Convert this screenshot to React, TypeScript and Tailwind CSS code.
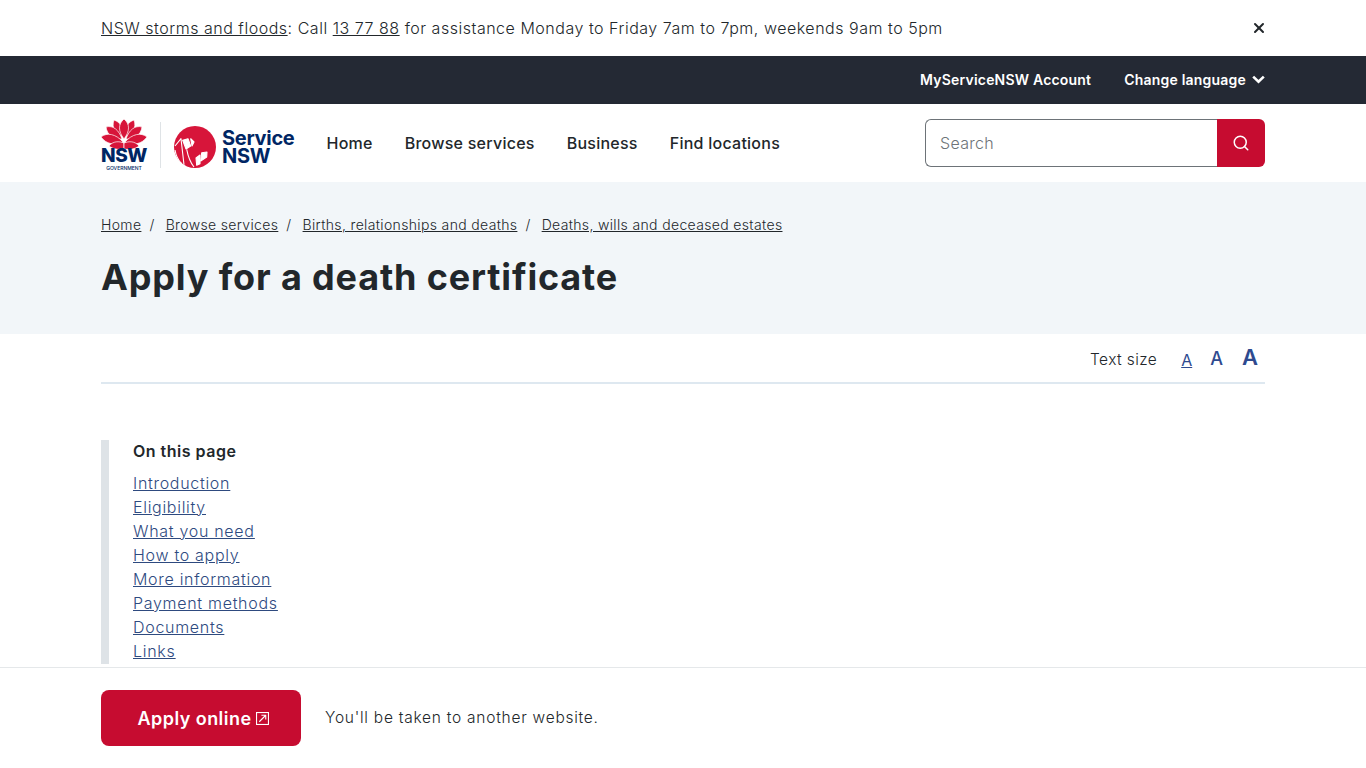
import { Search, X } from 'lucide-react';

const font = "font-['Inter','Liberation_Sans',sans-serif]";

const navLinks = ['Home', 'Browse services', 'Business', 'Find locations'];

const crumbs = [
  'Home',
  'Browse services',
  'Births, relationships and deaths',
  'Deaths, wills and deceased estates',
];

const pageLinks = [
  'Introduction',
  'Eligibility',
  'What you need',
  'How to apply',
  'More information',
  'Payment methods',
  'Documents',
  'Links',
];

function Petals() {
  return (
    <>
      <path d="M13 1 C19 3 22 8 22 17 C15 15 10 9 13 1Z" />
      <path d="M5 8 C12 6 18 11 21 20 C13 21 6 16 5 8Z" />
      <path d="M0 18 C6 13 15 15 22 23 C14 27 5 25 0 18Z" />
      <path d="M8 27 C12 22 18 22 23 24 L23 30 C17 31 12 30 8 27Z" />
    </>
  );
}

function NswLogo() {
  return (
    <div className="mt-[4px] flex w-[46px] flex-col items-center">
      <svg viewBox="0 0 46 30" className="h-[30px] w-[46px]">
        <g fill="#d7153a" stroke="#fff" strokeWidth="0.7">
          <Petals />
          <g transform="matrix(-1 0 0 1 46 0)">
            <Petals />
          </g>
          <path d="M23 0 C29 5 29 12 23 20 C17 12 17 5 23 0Z" />
        </g>
      </svg>
      <span className="mt-[-1px] text-[19px] leading-[16px] font-extrabold tracking-[-0.4px] text-[#002664]">NSW</span>
      <span className="mt-[1px] text-[5px] leading-[6px] font-medium text-[#002664]">GOVERNMENT</span>
    </div>
  );
}

function ServiceLogo() {
  return (
    <div className="mt-[8px] flex items-center gap-[6px]">
      <svg viewBox="0 0 42 42" className="h-[42px] w-[42px]">
        <circle cx="21" cy="21" r="21" fill="#d7153a" />
        <g fill="none" stroke="#fff" strokeWidth="1.1" strokeLinejoin="round">
          <path d="M1 20 L7 12.7 L10 38.7" />
          <path d="M1 24 C2 30 4 34 7.7 37.7" />
          <path d="M12.7 23.3 C14 30 16 36 20 41" />
          <path d="M8.7 14.3 L14 12.7 L16.7 20 L12 23Z" fill="#fff" />
          <path d="M16.7 12.7 L20 16 L18 20Z" fill="#fff" />
          <path d="M27.7 26.7 L33 26 L32.7 31 L26.7 35Z" fill="#fff" />
          <path d="M22 32 L26 29 L26 37.7 L22.7 39.3Z" fill="#fff" />
        </g>
      </svg>
      <div className="text-[20px] leading-[18px] font-bold tracking-[-0.3px] text-[#002664]">
        <div>Service</div>
        <div>NSW</div>
      </div>
    </div>
  );
}

export default function App() {
  return (
    <div className={`h-screen overflow-hidden bg-white text-[#22272b] ${font}`}>
      <div className="flex h-[56px] items-center justify-between px-[101px] pb-[1px] text-[16px] font-[350] tracking-[0.52px]">
        <p>
          <a href="#" className="underline">NSW storms and floods</a>: Call{' '}
          <a href="#" className="underline">13 77 88</a> for assistance Monday to Friday 7am to 7pm, weekends 9am to 5pm
        </p>
        <X size={16} strokeWidth={3} className="mr-[-2px]" />
      </div>

      <div className="flex h-[48px] items-center justify-end gap-[33px] bg-[#242934] px-[101px] pb-[1px] text-[14px] font-semibold tracking-[0.2px] text-white">
        <a href="#">MyServiceNSW Account</a>
        <a href="#" className="flex items-center gap-[6px]">
          Change language
          <svg viewBox="0 0 13 9" className="h-[9px] w-[13px]" fill="none" stroke="#fff" strokeWidth="2.6">
            <path d="M1.2 1.6 L6.5 6.8 L11.8 1.6" />
          </svg>
        </a>
      </div>

      <header className="flex h-[78px] items-center px-[101px] shadow-[0_1px_3px_rgba(0,0,0,0.08)]">
        <NswLogo />
        <div className="mx-[13px] mt-[4px] h-[46px] w-px bg-[#dfe3e6]" />
        <ServiceLogo />
        <nav className="ml-[32px] flex gap-[32px] text-[16px] font-medium tracking-[0.25px]">
          {navLinks.map((link) => (
            <a key={link} href="#">{link}</a>
          ))}
        </nav>
        <div className="ml-auto flex h-[48px] w-[340px]">
          <div className="flex flex-1 items-center rounded-l-[6px] border border-r-0 border-[#6d7378] pl-[14px] text-[16px] font-[350] tracking-[0.3px] text-[#6d7378]">
            Search
          </div>
          <div className="flex w-[48px] items-center justify-center rounded-r-[6px] bg-[#c60c30] text-white">
            <Search size={18} strokeWidth={2} />
          </div>
        </div>
      </header>

      <section className="h-[152px] bg-[#f2f6f9] px-[101px] pt-[34px]">
        <div className="flex text-[14px] leading-[18px] font-[350] tracking-[0.35px]">
          {crumbs.map((crumb, i) => (
            <span key={crumb} className="flex">
              <a href="#" className="underline">{crumb}</a>
              {i < crumbs.length - 1 && <span className="mr-[11px] ml-[8px]">/</span>}
            </span>
          ))}
        </div>
        <h1 className="mt-[19px] text-[36px] leading-[48px] font-bold tracking-[0.85px]">Apply for a death certificate</h1>
      </section>

      <div className="mx-[101px] flex h-[50px] items-center justify-end border-b-2 border-[#dee8f0] pr-[7px]">
        <span className="mt-[3px] mr-[24px] text-[15.5px] font-[350] tracking-[0.4px]">Text size</span>
        <a href="#" className="mt-[3px] mr-[18px] text-[16px] font-normal text-[#2e4a8f] underline">A</a>
        <a href="#" className="mr-[19px] text-[18px] font-medium text-[#2e4a8f]">A</a>
        <a href="#" className="pb-[2px] text-[22px] font-semibold text-[#2e4a8f]">A</a>
      </div>

      <div className="mx-[101px] mt-[56px] flex h-[224px] flex-col border-l-[8px] border-[#dee3e7] pl-[24px]">
        <h2 className="text-[16px] leading-[22px] font-semibold tracking-[0.5px]">On this page</h2>
        <ul className="mt-[9px]">
          {pageLinks.map((link) => (
            <li key={link} className="h-[24px] text-[16px] leading-[24px] font-[350] tracking-[0.7px] text-[#2e4a7f] underline">
              <a href="#">{link}</a>
            </li>
          ))}
        </ul>
      </div>

      <div className="fixed inset-x-0 bottom-0 flex h-[101px] items-center gap-[24px] border-t border-[#e5e8ea] bg-white px-[101px]">
        <a href="#" className="flex h-[56px] w-[200px] items-center justify-center gap-[4px] rounded-[8px] bg-[#c60c30] pl-[4px] text-[18px] font-semibold tracking-[0.45px] text-white">
          Apply online
          <svg viewBox="0 0 12 12" className="h-[13px] w-[13px]" fill="none" stroke="#fff">
            <rect x="0.5" y="0.5" width="11" height="11" />
            <path d="M3 9 L9 3 M5 3 H9 V7" />
          </svg>
        </a>
        <span className="text-[15.5px] font-[350] tracking-[0.75px]">You'll be taken to another website.</span>
      </div>
    </div>
  );
}
